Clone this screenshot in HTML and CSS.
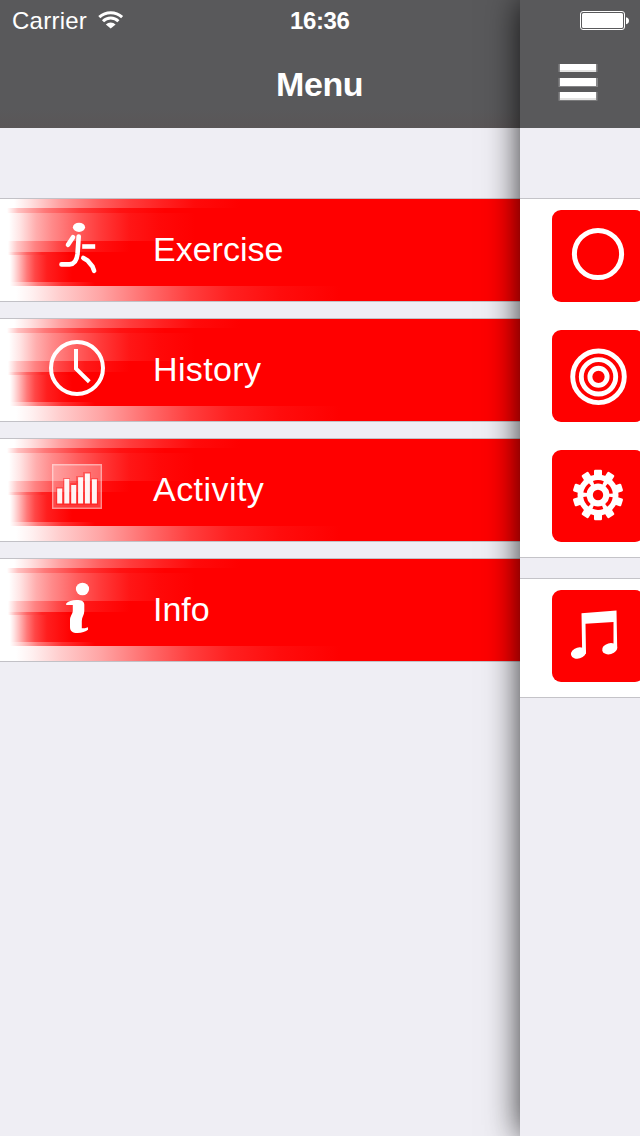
FILE: index.html
```html
<!DOCTYPE html>
<html lang="en">
<head>
<meta charset="utf-8">
<title>Menu</title>
<link rel="stylesheet" href="styles.css">
</head>
<body>
<div class="screen">
  <section class="menu">
    <header class="bar">
      <div class="status">
        <span class="carrier">Carrier</span>
        <svg class="wifi" width="26" height="20" viewBox="0 0 26 20"><g fill="none" stroke="#fff" stroke-width="3"><path d="M1.300 8.200a17 17 0 0 1 22.800 0"/><path d="M5 12.200a11 11 0 0 1 15.400 0"/></g><path d="M7.800 15.400a7 7 0 0 1 9.800 0l-4.900 4.200z" fill="#fff"/></svg>
        <span class="time">16:36</span>
      </div>
      <h1 class="title">Menu</h1>
    </header>
    <nav class="rows">
      <a class="row">
        <svg class="icon" width="60" height="102" viewBox="47 199 60 102"><ellipse cx="79" cy="227.3" rx="6.1" ry="4.6" fill="#fff"/><g fill="none" stroke="#fff" stroke-width="4.6" stroke-linecap="round" stroke-linejoin="round"><path d="M73 237.2L68 244.8"/><path d="M78.700 236.500L77.500 254c-.6 6-3.500 10-8 10.400h-8"/><path d="M84.500 246.500h8.400" stroke-linecap="square"/><path d="M83.300 258l4.200 2.500 5 6 1.600 4.300"/></g></svg>
        <span class="label">Exercise</span>
      </a>
      <a class="row">
        <svg class="icon" width="60" height="102" viewBox="47 319 60 102"><g fill="none" stroke="#fff" stroke-width="4"><circle cx="77" cy="368" r="26"/><path d="M76 349v19.700l13.300 13"/></g></svg>
        <span class="label wide">History</span>
      </a>
      <a class="row">
        <svg class="icon" width="60" height="102" viewBox="47 439 60 102"><path fill="#fff" fill-opacity=".22" d="M52 464h50v45H52z"/><path fill="none" stroke="#fff" stroke-opacity=".42" stroke-width="1.400" d="M52.700 464.700h48.600v43.600H52.700z"/><path fill="#f00" fill-opacity=".3" d="M56 487h7v-9h7v5h6v-7h7v-4h8v6h7v27H56z"/><path fill="#fff" fill-opacity=".95" d="M57.200 488.500h5v15h-5zM64.300 479h5v24.500h-5zM71.200 485h5v18.500h-5zM78.100 477.300h5v26.200h-5zM84.900 473.500h5v30h-5zM91.900 479.300h5v24.200h-5z"/></svg>
        <span class="label wider">Activity</span>
      </a>
      <a class="row">
        <svg class="icon" width="60" height="102" viewBox="47 559 60 102"><g fill="#fff"><ellipse cx="82.500" cy="589" rx="6.600" ry="6.300"/><path d="M66 603.700c2-2.700 6-3.800 10.500-3.800 5 0 7.800 1.300 7.800 4.600v6.500c0 4-2.500 6-2.500 10v7.300h3l3.200-1v2.500c-2 2-6.500 3.200-10.500 3.200-5 0-7.500-2-7.500-6v-7c0-4 2.800-6 2.800-9.500v-5.500h-6.500z"/></g></svg>
        <span class="label">Info</span>
      </a>
    </nav>
  </section>

  <main class="panel">
    <header class="bar panel-bar">
      <svg class="battery" width="50" height="20" viewBox="0 0 50 20"><rect x=".5" y=".5" width="44" height="18" rx="2.500" fill="none" stroke="#fff"/><rect x="2" y="2" width="41" height="15" rx="1.500" fill="#fff"/><path fill="#fff" d="M46 6.200c4 .6 4 6.300 0 7z"/></svg>
      <svg class="burger" width="42" height="42" viewBox="557 61 42 42"><path fill="#858587" d="M558.500 64H560v8h-1.500zM596 64h1.500v8H596zM558.500 78h39.500v9h-39.500zM558.500 92h39v8.800h-39z"/><path fill="#fff" d="M560 64h36v8h-36zM560 78h36v8h-36zM560 92h36v8h-36z"/><path fill="#e2e2e2" d="M560 70h36v2h-36zM560 98h36v2h-36z"/></svg>
    </header>
    <div class="group group-top">
      <div class="tile"><svg width="92" height="92" viewBox="552 210 92 92"><circle cx="598" cy="254" r="23.600" fill="none" stroke="#fff" stroke-width="5"/></svg></div>
      <div class="tile"><svg width="92" height="92" viewBox="552 330 92 92"><g fill="none" stroke="#fff" stroke-width="4.900"><circle cx="598.500" cy="376.800" r="25.800"/><circle cx="598.500" cy="376.800" r="17.200"/><circle cx="598.500" cy="376.800" r="8.600"/></g></svg></div>
      <div class="tile"><svg width="92" height="92" viewBox="552 450 92 92"><g transform="translate(598 495)"><g fill="#fff"><circle r="20.500"/><g id="teeth"><path id="tooth" d="M-4-18v-6q0-1.300 1.300-1.300h5.400q1.300 0 1.300 1.300v6z"/><use href="#tooth" transform="rotate(32)"/><use href="#tooth" transform="rotate(72)"/><use href="#tooth" transform="rotate(108)"/><use href="#tooth" transform="rotate(148)"/></g><use href="#teeth" transform="rotate(180)"/></g><circle r="13.200" fill="none" stroke="#f00" stroke-width="3.400" stroke-dasharray="9.800 4.024" stroke-dashoffset="-2"/><circle r="5.200" fill="#f00"/></g></svg></div>
    </div>
    <div class="group">
      <div class="tile"><svg width="92" height="92" viewBox="552 590 92 92"><g fill="#fff"><path d="M581.500 613.200l35-2.600.7 37.500h-3.700V622l-28 1.800.5 30h-3.800z"/><ellipse cx="578.500" cy="653" rx="7.700" ry="5.500" transform="rotate(-15 578.500 653)"/><ellipse cx="609.700" cy="648.700" rx="7.700" ry="5.500" transform="rotate(-15 609.700 648.700)"/></g></svg></div>
    </div>
  </main>
</div>
</body>
</html>
```
FILE: styles.css
```css
* { box-sizing: border-box; }

body {
  margin: 0;
  background: #efeef4;
  color: #fff;
  font-family: "Liberation Sans", Arial, sans-serif;
}

.screen {
  display: flex;
  width: 640px;
  height: 1136px;
  overflow: hidden;
}

.menu { width: 520px; }

.bar {
  height: 128px;
  background: #59595b;
}

.menu .bar { background: linear-gradient(#59595b 85%, #5a5657); }

.status {
  display: flex;
  height: 40px;
  padding-left: 12px;
  font-size: 24px;
  line-height: 42px;
}

.carrier { width: 86px; letter-spacing: .25px; }
.wifi { margin-top: 9px; }
.time { margin-left: 166px; font-weight: bold; letter-spacing: -.4px; }

.title {
  margin: 0;
  padding-left: 276px;
  font-size: 34px;
  line-height: 89px;
  letter-spacing: -.4px;
}

.rows {
  display: flex;
  flex-direction: column;
  gap: 16px;
  padding-top: 70px;
}

.row {
  display: flex;
  height: 104px;
  padding-left: 47px;
  border-top: 1px solid #c2c1c6;
  border-bottom: 1px solid #c2c1c6;
  background-color: #f00;
  background-repeat: no-repeat;
  background-origin: padding-box;
  background-clip: padding-box;
  background-image:
    linear-gradient(90deg, #fff 14px, #ffe1e1 30px, #ffa0a0 60px, #ff5f5f 100px, #ff3c3c 130px, #ff2323 160px, #ff0a0a 195px, #f00 240px),
    linear-gradient(90deg, #fff 7px, #ffc0c0 18px, #ff7878 45px, #ff3a3a 80px, #ff1212 120px, #f00 165px),
    linear-gradient(90deg, #fff 9px, #ffe4e4 20px, #ffaeae 36px, #ff8a8a 52px, #ff5c5c 78px, #ff3838 102px, #ff1616 130px, #ff0808 160px, #f00 195px),
    linear-gradient(90deg, #fff 8px, #ffc8c8 17px, #ff8282 35px, #ff4848 58px, #ff1818 85px, #f00 130px),
    linear-gradient(90deg, #fff 8px, #ffb8b8 15px, #ff6464 27px, #ff2424 42px, #f00 70px),
    linear-gradient(90deg, #fff 10px, #ffe4e4 14px, #ffb4b4 20px, #ff7878 27px, #ff4646 35px, #ff1e1e 47px, #f00 72px),
    linear-gradient(90deg, #fff 10px, #ffc8c8 22px, #ff7878 38px, #ff3030 62px, #f00 95px),
    linear-gradient(90deg, #fff 16px, #fff0f0 32px, #ffcdcd 60px, #ffa5a5 100px, #ff6969 150px, #ff3e3e 190px, #ff2020 230px, #ff0c0c 280px, #f00 340px);
  background-size: 100% 9px, 100% 5px, 100% 28px, 100% 11px, 100% 3px, 100% 27px, 100% 4px, 100% 15px;
  background-position: 0 0, 0 9px, 0 14px, 0 42px, 0 53px, 0 56px, 0 83px, 0 87px;
}

.label {
  margin-left: 46px;
  font-size: 34px;
  line-height: 100px;
}

.wide { letter-spacing: .35px; }
.wider { letter-spacing: .45px; }

.panel {
  width: 120px;
  background: #efeef4;
  box-shadow: 0 0 32px rgba(0, 0, 0, .8);
}

.panel-bar {
  display: flex;
  flex-direction: column;
  padding: 11px 0 0 37px;
}

.battery { margin-left: 23px; }
.burger { margin-top: 30px; }

.group {
  display: flex;
  flex-direction: column;
  gap: 28px;
  height: 120px;
  margin-top: 20px;
  padding: 11px 0 0 32px;
  border-top: 1px solid #c4c3c8;
  border-bottom: 1px solid #c4c3c8;
  background: #fff;
}

.group-top { height: 360px; margin-top: 70px; }

.tile {
  width: 92px;
  height: 92px;
  border-radius: 9px;
  background: #f00;
}

.tile svg { display: block; }
```
